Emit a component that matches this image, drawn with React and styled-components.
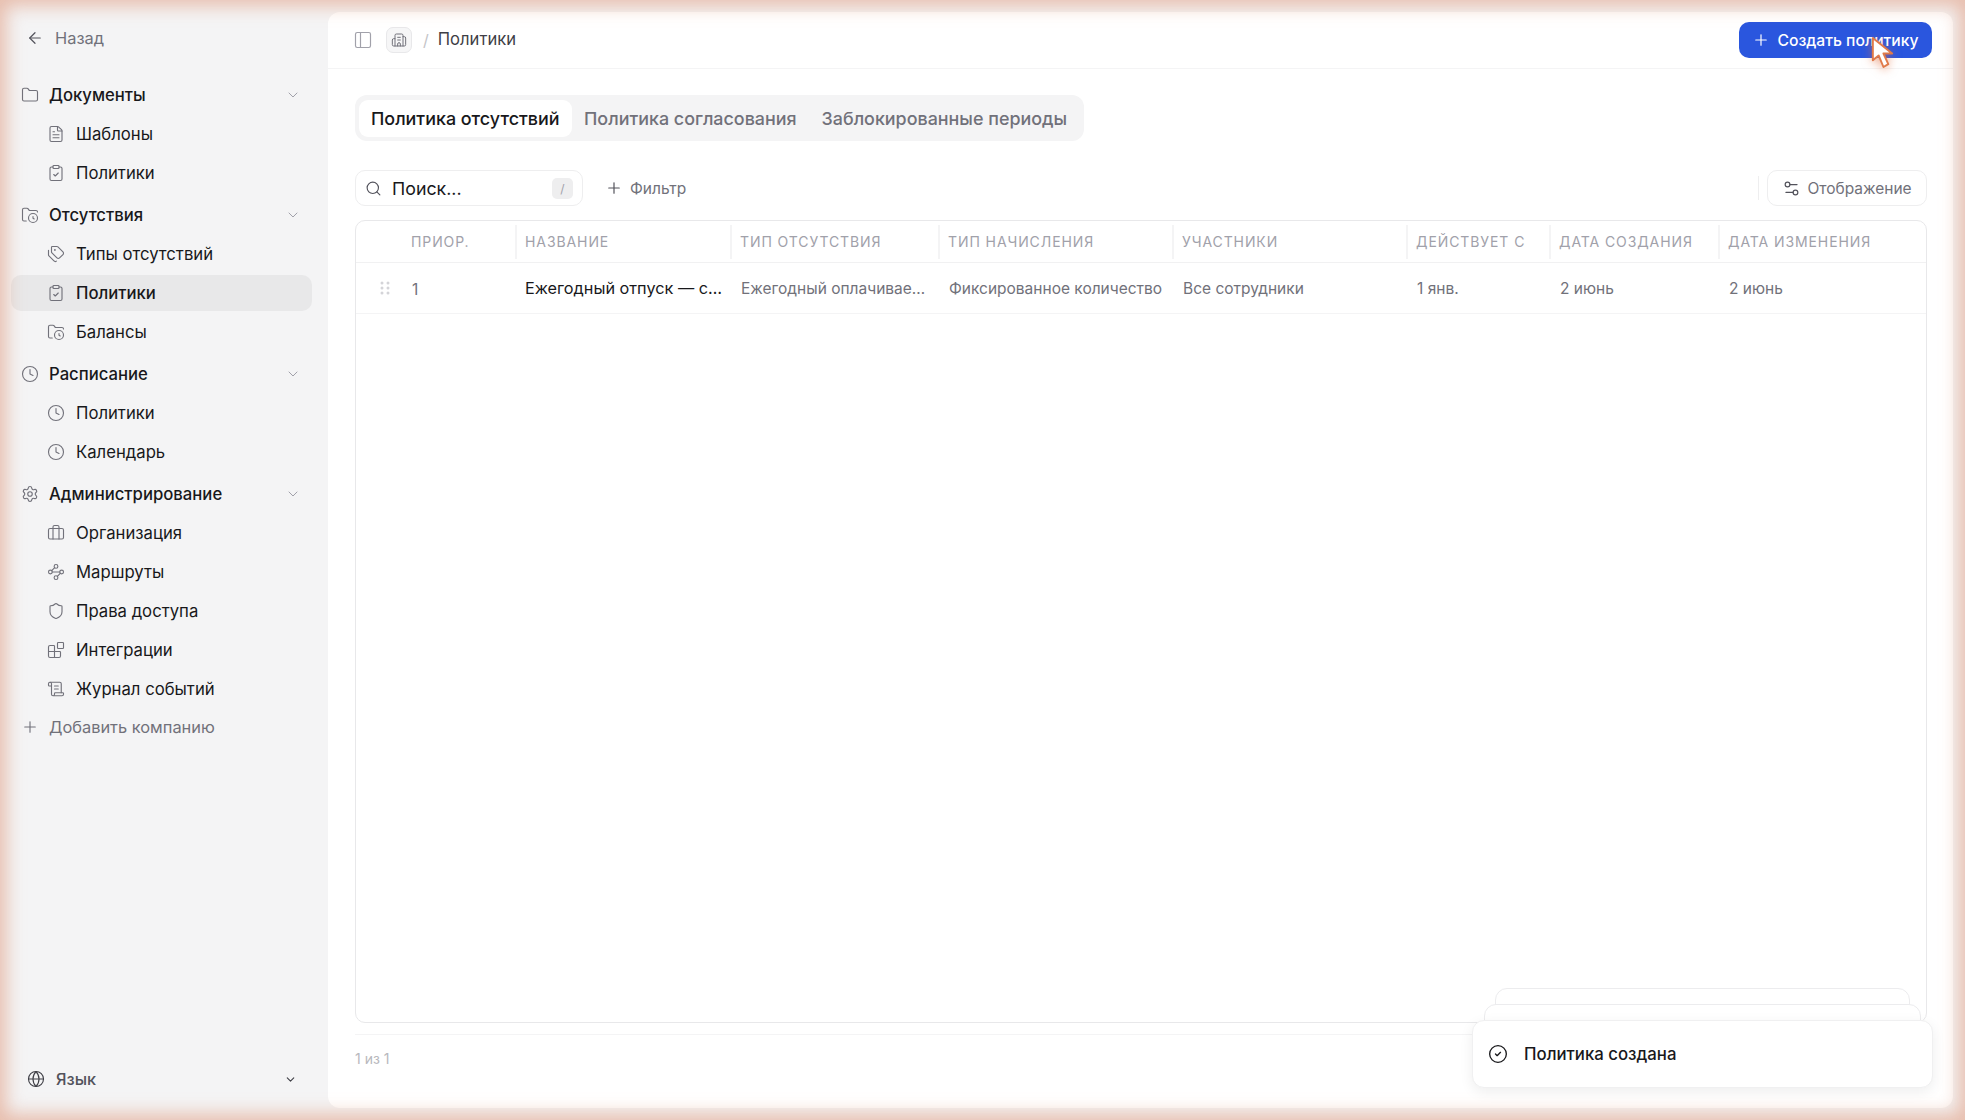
import React from 'react';
import styled, { createGlobalStyle } from 'styled-components';
import {
  ArrowLeft, Folder, FileText, ClipboardCheck, FolderClock, Tags, Clock, Settings, Briefcase, Waypoints, Shield, Blocks,
  ScrollText, Plus, Globe, ChevronDown, PanelLeft, Building2, Search, Settings2, CircleCheck,
} from 'lucide-react';

const Global = createGlobalStyle`
  html, body { margin: 0; padding: 0; height: 100%; }
  body { font-family: Inter, "Liberation Sans", sans-serif; background: #f4f4f5; color: #18181b; overflow: hidden; }
  #root { height: 100%; }
  * { box-sizing: border-box; }
`;

const Shell = styled.div`
  position: relative;
  display: flex;
  width: 1965px;
  height: 1120px;
  background: #f4f4f5;
  overflow: hidden;
`;
const Glow = styled.div`
  position: absolute;
  inset: 0;
  pointer-events: none;
  z-index: 20;
  box-shadow: inset 0 0 18px 6px rgba(222, 150, 120, 0.58);
`;
const Sidebar = styled.aside`
  width: 328px;
  flex: none;
  display: flex;
  flex-direction: column;
  padding: 20px 16px 23px 11px;
`;
const Back = styled.div`
  height: 36px;
  display: flex;
  align-items: center;
  gap: 11px;
  padding-left: 15px;
  font-size: 16.4px;
  color: #71717a;
  margin-bottom: 21px;
  svg { width: 18px; height: 18px; stroke-width: 1.6; color: #52525b; }
`;
const Nav = styled.nav`
  display: flex;
  flex-direction: column;
  flex: 1;
`;
const Group = styled.section`
  display: flex;
  flex-direction: column;
  gap: 3px;
  margin-bottom: 6px;
`;
const GroupHead = styled.div`
  height: 36px;
  display: flex;
  align-items: center;
  padding: 0 11px 0 10px;
  font-size: 16.7px;
  font-weight: 500;
  color: #18181b;
  svg.lead { width: 18px; height: 18px; flex: none; color: #71717a; stroke-width: 1.5; margin-right: 10px; }
  svg.chev { width: 16px; height: 16px; margin-left: auto; color: #a1a1aa; stroke-width: 1.5; }
`;
const Item = styled.div`
  height: 36px;
  display: flex;
  align-items: center;
  padding-left: 36px;
  border-radius: 10px;
  font-size: 16.7px;
  font-weight: ${(p) => (p.$active ? 500 : 400)};
  color: #18181b;
  background: ${(p) => (p.$active ? '#e8e8e9' : 'transparent')};
  svg { width: 18px; height: 18px; flex: none; color: #71717a; stroke-width: 1.5; margin-right: 11px; }
`;
const AddRow = styled(GroupHead)`
  font-size: 16.4px;
  font-weight: 400;
  color: #71717a;
  margin-top: -4px;
`;
const LangRow = styled.div`
  height: 36px;
  display: flex;
  align-items: center;
  padding: 0 15px 0 16px;
  font-size: 16.25px;
  font-weight: 500;
  color: #52525b;
  svg.lead { width: 18px; height: 18px; color: #3f3f46; stroke-width: 1.5; margin-right: 11px; }
  svg.chev { width: 13px; height: 13px; margin-left: auto; color: #3f3f46; stroke-width: 2; }
`;
const Panel = styled.main`
  flex: 1;
  margin: 12px 12px 12px 0;
  background: #fff;
  border-radius: 12px;
  display: flex;
  flex-direction: column;
  min-width: 0;
`;
const TopBar = styled.header`
  height: 57px;
  flex: none;
  border-bottom: 1px solid #f4f4f5;
  display: flex;
  align-items: center;
  padding: 0 21px 0 25px;
  color: #3f3f46;
`;
const SideToggle = styled.span`
  display: flex;
  margin-right: 13px;
  svg { width: 20px; height: 20px; color: #a1a1aa; stroke-width: 1.4; }
`;
const OrgBadge = styled.span`
  width: 26px;
  height: 26px;
  border: 1px solid #e8e8ea;
  border-radius: 7px;
  background: #f6f6f7;
  display: flex;
  align-items: center;
  justify-content: center;
  svg { width: 16px; height: 16px; color: #71717a; stroke-width: 1.5; }
`;
const Slash = styled.span`
  color: #c4c4c8;
  font-size: 16px;
  margin: 0 9px 0 11px;
`;
const Crumb = styled.span`
  font-size: 16.6px;
  color: #3f3f46;
  position: relative;
  top: -1px;
`;
const PrimaryButton = styled.button`
  margin-left: auto;
  height: 36px;
  width: 193px;
  border: 0;
  border-radius: 10px;
  background: #2a56de;
  color: #fff;
  font: 500 15.7px Inter, sans-serif;
  display: flex;
  align-items: center;
  justify-content: center;
  gap: 7px;
  svg { width: 18px; height: 18px; stroke-width: 1.6; }
`;
const Content = styled.div`
  flex: 1;
  display: flex;
  flex-direction: column;
  padding: 26px 26px 0 27px;
  min-height: 0;
`;
const Tabs = styled.div`
  align-self: flex-start;
  height: 46px;
  display: flex;
  align-items: center;
  background: #f4f4f5;
  border-radius: 12px;
  padding: 0 4px;
  font-size: 17.9px;
  font-weight: 500;
`;
const Tab = styled.div`
  height: 37px;
  display: flex;
  align-items: center;
  padding: 0 ${(p) => (p.$active ? '12px' : '12.5px')};
  border-radius: 9px;
  background: ${(p) => (p.$active ? '#fff' : 'transparent')};
  color: ${(p) => (p.$active ? '#18181b' : '#71717a')};
  white-space: nowrap;
`;
const Toolbar = styled.div`
  height: 36px;
  margin-top: 29px;
  display: flex;
  align-items: center;
`;
const SearchBox = styled.div`
  width: 228px;
  height: 36px;
  border: 1.5px solid #eeeeef;
  border-radius: 10px;
  display: flex;
  align-items: center;
  padding: 0 9px;
  font-size: 17.8px;
  color: #18181b;
  svg { width: 17px; height: 17px; color: #52525b; stroke-width: 1.6; margin-right: 10px; }
`;
const Kbd = styled.span`
  margin-left: auto;
  width: 21px;
  height: 21px;
  border-radius: 5px;
  background: #eeeeef;
  color: #a1a1aa;
  font-size: 12px;
  display: flex;
  align-items: center;
  justify-content: center;
`;
const FilterButton = styled.div`
  margin-left: 22px;
  display: flex;
  align-items: center;
  gap: 7px;
  font-size: 15.5px;
  color: #71717a;
  svg { width: 18px; height: 18px; stroke-width: 1.6; color: #52525b; }
`;
const Divider = styled.span`
  margin-left: auto;
  width: 1px;
  height: 24px;
  background: #eeeeef;
  margin-right: 8px;
`;
const DisplayButton = styled.div`
  width: 160px;
  height: 36px;
  border: 1.5px solid #eeeeef;
  border-radius: 10px;
  display: flex;
  align-items: center;
  justify-content: center;
  gap: 6px;
  font-size: 15.5px;
  color: #71717a;
  svg { width: 19px; height: 19px; stroke-width: 1.5; color: #52525b; }
`;
const Table = styled.div`
  flex: 1;
  margin-top: 14px;
  border: 1px solid #e8e8ea;
  border-radius: 10px;
  min-height: 0;
  overflow: hidden;
`;
const cols = '159px 215px 208px 234px 234px 143px 169px 1fr';
const HeadRow = styled.div`
  display: grid;
  grid-template-columns: ${cols};
  height: 42px;
  align-items: center;
  border-bottom: 1.5px solid #f1f1f2;
`;
const HeadCell = styled.div`
  height: 34px;
  display: flex;
  align-items: center;
  padding-left: ${(p) => (p.$first ? '55px' : '8px')};
  border-left: ${(p) => (p.$first ? '0' : '2px solid #f4f4f5')};
  font-size: 14px;
  letter-spacing: 0.065em;
  text-transform: uppercase;
  color: #a1a1aa;
  white-space: nowrap;
`;
const BodyRow = styled.div`
  display: grid;
  grid-template-columns: ${cols};
  height: 51px;
  align-items: center;
  border-bottom: 1.5px solid #f4f4f5;
`;
const Cell = styled.div`
  padding-left: ${(p) => (p.$strong ? '10px' : '11px')};
  padding-right: ${(p) => (p.$strong ? '3px' : '8px')};
  font-size: ${(p) => (p.$strong ? '16.25px' : '15.5px')};
  color: ${(p) => (p.$strong ? '#18181b' : '#71717a')};
  white-space: nowrap;
  overflow: hidden;
  text-overflow: ellipsis;
`;
const PriorityCell = styled.div`
  display: flex;
  align-items: center;
  padding-left: 24px;
  font-size: 15.5px;
  color: #71717a;
  gap: 22px;
  span { position: relative; top: 1px; }
`;
const Grip = styled.svg`
  width: 10px;
  height: 14px;
  fill: #d4d4d8;
`;
const Footer = styled.footer`
  height: 74px;
  flex: none;
  margin-top: 11px;
  border-top: 1px solid #f4f4f5;
  padding-top: 14px;
  font-size: 14px;
  color: #b8b8bd;
  line-height: 20px;
`;
const ToastStack = styled.div`
  position: absolute;
  left: 1472px;
  top: 988px;
  width: 461px;
  height: 100px;
  z-index: 5;
`;
const GhostToast = styled.div`
  position: absolute;
  left: ${(p) => p.$inset}px;
  right: ${(p) => p.$inset}px;
  top: ${(p) => p.$top}px;
  height: 60px;
  background: #fff;
  border: 1.5px solid #ececee;
  border-radius: 12px;
`;
const Toast = styled.div`
  position: absolute;
  inset: 32px 0 0 0;
  background: #fff;
  border: 1px solid #f0f0f1;
  border-radius: 12px;
  box-shadow: 0 4px 14px rgba(0, 0, 0, 0.07);
  display: flex;
  align-items: center;
  gap: 16px;
  padding-left: 15px;
  font-size: 16.8px;
  font-weight: 500;
  color: #18181b;
  svg { width: 20px; height: 20px; stroke-width: 1.6; }
`;
const Cursor = styled.svg`
  position: absolute;
  left: 1869px;
  top: 36px;
  width: 27px;
  height: 35px;
  z-index: 10;
  filter: drop-shadow(0 2px 5px rgba(226, 110, 60, 0.55));
`;

const nav = [
  { icon: Folder, label: 'Документы', items: [[FileText, 'Шаблоны'], [ClipboardCheck, 'Политики']] },
  { icon: FolderClock, label: 'Отсутствия', items: [[Tags, 'Типы отсутствий'], [ClipboardCheck, 'Политики', true], [FolderClock, 'Балансы']] },
  { icon: Clock, label: 'Расписание', items: [[Clock, 'Политики'], [Clock, 'Календарь']] },
  { icon: Settings, label: 'Администрирование', items: [[Briefcase, 'Организация'], [Waypoints, 'Маршруты'], [Shield, 'Права доступа'], [Blocks, 'Интеграции'], [ScrollText, 'Журнал событий']] },
];
const heads = ['Приор.', 'Название', 'Тип отсутствия', 'Тип начисления', 'Участники', 'Действует с', 'Дата создания', 'Дата изменения'];

export default function App() {
  return (
    <Shell>
      <Global />
      <Sidebar>
        <Back><ArrowLeft />Назад</Back>
        <Nav>
          {nav.map((g) => (
            <Group key={g.label}>
              <GroupHead>
                <g.icon className="lead" />
                {g.label}
                <ChevronDown className="chev" />
              </GroupHead>
              {g.items.map(([I, l, a]) => (
                <Item key={l} $active={a}><I />{l}</Item>
              ))}
            </Group>
          ))}
          <AddRow><Plus className="lead" />Добавить компанию</AddRow>
        </Nav>
        <LangRow><Globe className="lead" />Язык<ChevronDown className="chev" /></LangRow>
      </Sidebar>
      <Panel>
        <TopBar>
          <SideToggle><PanelLeft /></SideToggle>
          <OrgBadge><Building2 /></OrgBadge>
          <Slash>/</Slash>
          <Crumb>Политики</Crumb>
          <PrimaryButton><Plus />Создать политику</PrimaryButton>
        </TopBar>
        <Content>
          <Tabs>
            <Tab $active>Политика отсутствий</Tab>
            <Tab>Политика согласования</Tab>
            <Tab>Заблокированные периоды</Tab>
          </Tabs>
          <Toolbar>
            <SearchBox><Search />Поиск...<Kbd>/</Kbd></SearchBox>
            <FilterButton><Plus />Фильтр</FilterButton>
            <Divider />
            <DisplayButton><Settings2 />Отображение</DisplayButton>
          </Toolbar>
          <Table>
            <HeadRow>
              {heads.map((h, i) => <HeadCell key={h} $first={i === 0}>{h}</HeadCell>)}
            </HeadRow>
            <BodyRow>
              <PriorityCell>
                <Grip viewBox="0 0 10 14">
                  {[2, 7, 12].flatMap((y) => [2, 8].map((x) => <circle key={`${x}-${y}`} cx={x} cy={y} r="1.5" />))}
                </Grip>
                <span>1</span>
              </PriorityCell>
              <Cell $strong>Ежегодный отпуск — сотрудники</Cell>
              <Cell>Ежегодный оплачиваемый отпуск</Cell>
              <Cell>Фиксированное количество</Cell>
              <Cell>Все сотрудники</Cell>
              <Cell>1 янв.</Cell>
              <Cell>2 июнь</Cell>
              <Cell>2 июнь</Cell>
            </BodyRow>
          </Table>
          <Footer>1 из 1</Footer>
        </Content>
      </Panel>
      <ToastStack>
        <GhostToast $inset={23} $top={0} />
        <GhostToast $inset={12} $top={16} />
        <Toast><CircleCheck />Политика создана</Toast>
      </ToastStack>
      <Cursor viewBox="0 0 28 36">
        <path d="M4 2 L4 25 L10 20 L15 32 L20 29 L15 18 L24 18 Z" fill="#fff" stroke="#e07a4a" strokeWidth="2" strokeLinejoin="round" />
      </Cursor>
      <Glow />
    </Shell>
  );
}
